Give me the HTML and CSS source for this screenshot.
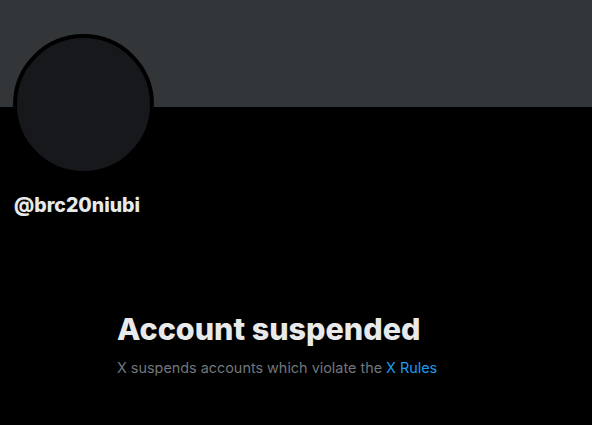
FILE: index.html
```html
<!DOCTYPE html>
<html>
<head>
<meta charset="utf-8">
<link rel="stylesheet" href="styles.css">
</head>
<body>
<div class="page">
  <div class="banner"></div>
  <div class="profile">
    <div class="avatar"></div>
    <div class="handle">@brc20niubi</div>
  </div>
  <div class="notice">
    <h1 class="title">Account suspended</h1>
    <p class="desc">X suspends accounts which violate the <a class="link" href="#">X Rules</a></p>
  </div>
</div>
</body>
</html>
```
FILE: styles.css
```css
html, body {
  margin: 0;
  padding: 0;
  background: #000;
}
.page {
  width: 592px;
  height: 425px;
  overflow: hidden;
  font-family: Inter, "Noto Sans", sans-serif;
  color: #e7e9ea;
}
.banner {
  height: 107px;
  background: #333639;
}
.profile {
  display: flex;
  flex-direction: column;
  align-items: flex-start;
  padding-left: 13px;
}
.avatar {
  width: 133px;
  height: 133px;
  margin-top: -73px;
  border-radius: 50%;
  background: #16181c;
  border: 4px solid #000;
}
.handle {
  margin-top: 18px;
  margin-left: 1px;
  font-size: 19.5px;
  font-weight: 800;
  line-height: 24px;
  color: #e7e9ea;
}
.notice {
  padding-left: 117px;
  margin-top: 94px;
}
.title {
  margin: 0;
  font-size: 30.5px;
  font-weight: 800;
  line-height: 36px;
  color: #e7e9ea;
}
.desc {
  margin: 11px 0 0;
  font-size: 14.4px;
  line-height: 20px;
  color: #71767b;
}
.link {
  color: #1d9bf0;
  text-decoration: none;
}
```
